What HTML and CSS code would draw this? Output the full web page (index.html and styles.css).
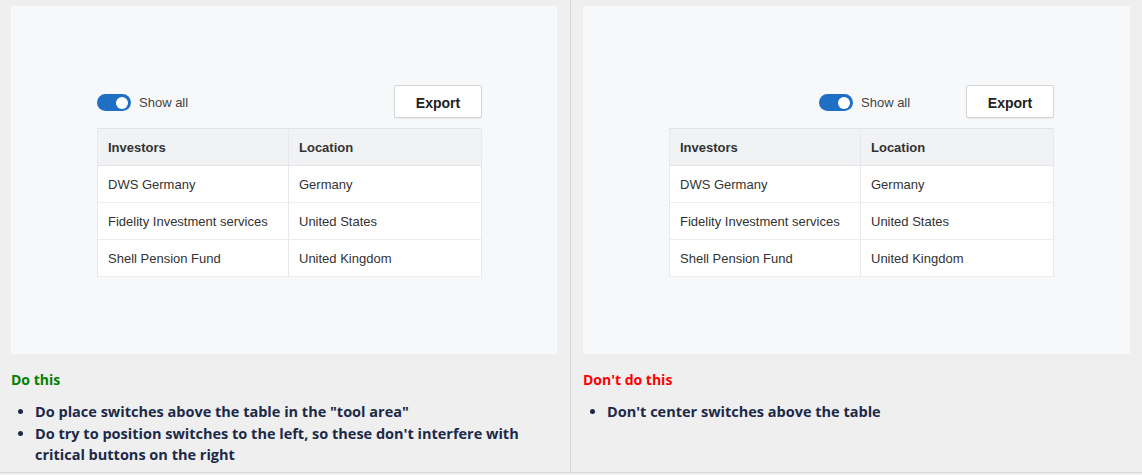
FILE: index.html
```html
<!DOCTYPE html>
<html>
<head>
<meta charset="utf-8">
<link rel="stylesheet" href="styles.css">
</head>
<body>
<div class="guide">
  <div class="col">
    <div class="panel">
      <div class="demo">
        <div class="toolbar">
          <div class="switch-group">
            <span class="switch"><span class="knob"></span></span>
            <span class="switch-label">Show all</span>
          </div>
          <button class="btn">Export</button>
        </div>
        <div class="table">
          <div class="row head"><div class="cell">Investors</div><div class="cell">Location</div></div>
          <div class="row"><div class="cell">DWS Germany</div><div class="cell">Germany</div></div>
          <div class="row"><div class="cell">Fidelity Investment services</div><div class="cell">United States</div></div>
          <div class="row"><div class="cell">Shell Pension Fund</div><div class="cell">United Kingdom</div></div>
        </div>
      </div>
    </div>
    <h3 class="title do">Do this</h3>
    <ul class="notes">
      <li>Do place switches above the table in the "tool area"</li>
      <li>Do try to position switches to the left, so these don't interfere with critical buttons on the right</li>
    </ul>
  </div>
  <div class="col right">
    <div class="panel">
      <div class="demo">
        <div class="toolbar centered">
          <div class="switch-group">
            <span class="switch"><span class="knob"></span></span>
            <span class="switch-label">Show all</span>
          </div>
          <button class="btn">Export</button>
        </div>
        <div class="table">
          <div class="row head"><div class="cell">Investors</div><div class="cell">Location</div></div>
          <div class="row"><div class="cell">DWS Germany</div><div class="cell">Germany</div></div>
          <div class="row"><div class="cell">Fidelity Investment services</div><div class="cell">United States</div></div>
          <div class="row"><div class="cell">Shell Pension Fund</div><div class="cell">United Kingdom</div></div>
        </div>
      </div>
    </div>
    <h3 class="title dont">Don't do this</h3>
    <ul class="notes">
      <li>Don't center switches above the table</li>
    </ul>
  </div>
</div>
</body>
</html>
```
FILE: styles.css
```css
* { box-sizing: border-box; }
html, body { margin: 0; padding: 0; }
body {
  background: #efefef;
  font-family: "Open Sans", "Noto Sans", sans-serif;
}
.guide {
  display: grid;
  grid-template-columns: 570px 1fr;
  height: 473px;
  border-bottom: 1px solid #d8d8d8;
}
.col {
  padding: 6px 13px 0 11px;
}
.col.right {
  border-left: 1px solid #d6d6d6;
  padding: 6px 12px 0 12px;
}
.panel {
  background: #f7f8fa;
  height: 348px;
  padding: 79px 0 0 86px;
}
.demo {
  width: 385px;
  font-family: "Liberation Sans", Arial, sans-serif;
  color: #333;
}
.toolbar {
  display: flex;
  align-items: center;
  justify-content: space-between;
  height: 33px;
  margin-bottom: 10px;
}
.toolbar.centered .switch-group { margin-left: 150px; margin-right: auto; }
.switch-group {
  display: flex;
  align-items: center;
  gap: 8px;
  padding-top: 2px;
}
.switch {
  width: 34px;
  height: 17px;
  border-radius: 9px;
  background: #1f6fc5;
  position: relative;
  display: inline-block;
}
.knob {
  position: absolute;
  right: 3px;
  top: 2.5px;
  width: 12px;
  height: 12px;
  border-radius: 50%;
  background: #fff;
}
.switch-label {
  font-size: 13px;
  color: #444;
}
.btn {
  width: 88px;
  height: 33px;
  padding: 2px 0 0 0;
  background: #fff;
  border: 1px solid #d3d5d9;
  border-radius: 2px;
  font-family: "Liberation Sans", Arial, sans-serif;
  font-weight: 700;
  font-size: 14px;
  color: #222;
  box-shadow: 0 1px 1px rgba(0,0,0,0.06);
}
.table {
  border: 1px solid #e6e8eb;
  border-top: 1px solid #e1e3e6;
  border-bottom: 0;
}
.row {
  display: grid;
  grid-template-columns: 191px 1fr;
  height: 37px;
  background: #fff;
  border-bottom: 1px solid #eceef0;
}
.row.head {
  background: #f1f2f4;
  font-weight: 700;
  border-bottom: 1px solid #e3e5e8;
}
.cell {
  display: flex;
  align-items: center;
  padding-left: 10px;
  padding-top: 1px;
  font-size: 13px;
}
.cell:first-child { border-right: 1px solid #e6e8eb; }
.title {
  margin: 16px 0 0 0;
  font-size: 14px;
  font-weight: 700;
  line-height: 20px;
}
.title.do { color: #008000; }
.title.dont { color: #ff0000; }
.notes {
  margin: 11px 0 0 0;
  padding-left: 24px;
  font-size: 14.5px;
  font-weight: 700;
  line-height: 21.5px;
  color: #1b2a48;
}
.notes li { padding-left: 0; }
```
